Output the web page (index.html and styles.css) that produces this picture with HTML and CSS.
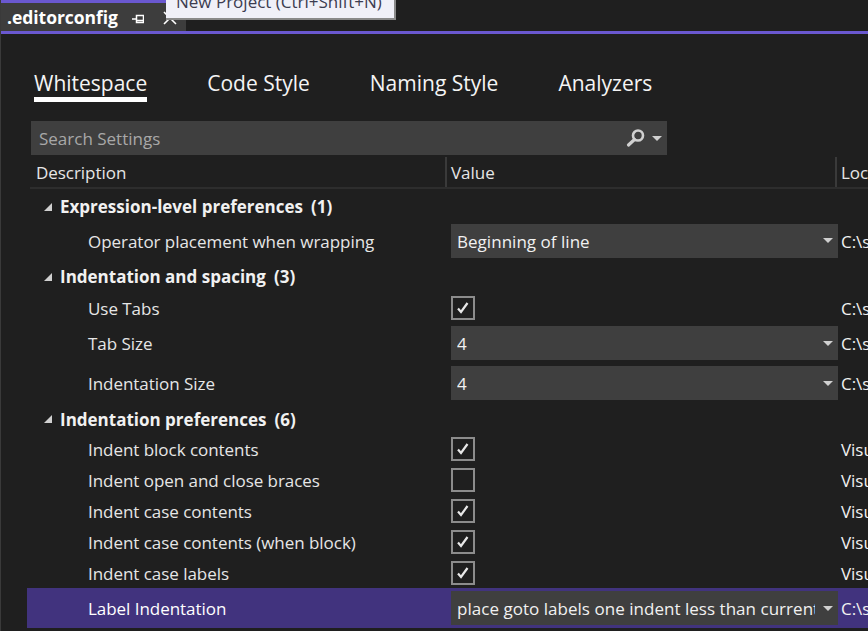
FILE: index.html
```html
<!DOCTYPE html>
<html lang="en">

<head>
    <meta charset="UTF-8">
    <title>.editorconfig</title>
    <link rel="stylesheet" href="styles.css">
</head>

<body>
    <div class="tabstrip">
        <div class="doc-tab">
            <span class="doc-name">.editorconfig</span>
            <svg class="pin" width="12" height="12" viewBox="0 0 12 12">
                <path d="M0 6h4M4.500 2.500h7v7h-7zM4.500 7.500h7" fill="none" stroke="#fff" stroke-width="1.500"/>
            </svg>
            <svg class="close" width="14" height="14" viewBox="0 0 14 14">
                <path d="M1 1l12 12M13 1L1 13" fill="none" stroke="#fff" stroke-width="1.600"/>
            </svg>
        </div>
        <div class="tooltip">New Project (Ctrl+Shift+N)</div>
    </div>

    <div class="editor">
        <div class="nav">
            <a class="nav-item active">Whitespace</a>
            <a class="nav-item">Code Style</a>
            <a class="nav-item">Naming Style</a>
            <a class="nav-item">Analyzers</a>
        </div>

        <div class="search">
            <span class="search-text">Search Settings</span>
            <svg class="search-icon" width="20" height="20" viewBox="0 0 20 20">
                <circle cx="12" cy="7.500" r="5" fill="none" stroke="#d0d0d0" stroke-width="2.600"/>
                <path d="M8.500 11.500L2.500 17" fill="none" stroke="#d0d0d0" stroke-width="3.200" stroke-linecap="round"/>
            </svg>
            <span class="arrow search-arrow"></span>
        </div>

        <div class="head">
            <div class="head-cell first">Description</div>
            <div class="head-cell second">Value</div>
            <div class="head-cell third">Location</div>
        </div>

        <div class="group first-group"><span class="tri"></span>Expression-level preferences<span class="count">(1)</span></div>
        <div class="row drop-one">
            <div class="name">Operator placement when wrapping</div>
            <div class="drop"><span class="drop-text">Beginning of line</span><span class="arrow"></span></div>
            <div class="loc">C:\src\.editorconfig</div>
        </div>

        <div class="group first-group"><span class="tri"></span>Indentation and spacing<span class="count">(3)</span></div>
        <div class="row check">
            <div class="name">Use Tabs</div>
            <div class="box"><svg width="16" height="16" viewBox="0 0 16 16"><path d="M3 8.500l3 3.500 6.500-9" fill="none" stroke="#e8e8e8" stroke-width="2.200"/></svg></div>
            <div class="loc">C:\src\.editorconfig</div>
        </div>
        <div class="row drop-row">
            <div class="name">Tab Size</div>
            <div class="drop"><span class="drop-text">4</span><span class="arrow"></span></div>
            <div class="loc">C:\src\.editorconfig</div>
        </div>
        <div class="row drop-row">
            <div class="name">Indentation Size</div>
            <div class="drop"><span class="drop-text">4</span><span class="arrow"></span></div>
            <div class="loc">C:\src\.editorconfig</div>
        </div>

        <div class="group last-group"><span class="tri"></span>Indentation preferences<span class="count">(6)</span></div>
        <div class="row check">
            <div class="name">Indent block contents</div>
            <div class="box"><svg width="16" height="16" viewBox="0 0 16 16"><path d="M3 8.500l3 3.500 6.500-9" fill="none" stroke="#e8e8e8" stroke-width="2.200"/></svg></div>
            <div class="loc">Visual Studio defaults</div>
        </div>
        <div class="row check">
            <div class="name">Indent open and close braces</div>
            <div class="box"></div>
            <div class="loc">Visual Studio defaults</div>
        </div>
        <div class="row check">
            <div class="name">Indent case contents</div>
            <div class="box"><svg width="16" height="16" viewBox="0 0 16 16"><path d="M3 8.500l3 3.500 6.500-9" fill="none" stroke="#e8e8e8" stroke-width="2.200"/></svg></div>
            <div class="loc">Visual Studio defaults</div>
        </div>
        <div class="row check">
            <div class="name">Indent case contents (when block)</div>
            <div class="box"><svg width="16" height="16" viewBox="0 0 16 16"><path d="M3 8.500l3 3.500 6.500-9" fill="none" stroke="#e8e8e8" stroke-width="2.200"/></svg></div>
            <div class="loc">Visual Studio defaults</div>
        </div>
        <div class="row check">
            <div class="name">Indent case labels</div>
            <div class="box"><svg width="16" height="16" viewBox="0 0 16 16"><path d="M3 8.500l3 3.500 6.500-9" fill="none" stroke="#e8e8e8" stroke-width="2.200"/></svg></div>
            <div class="loc">Visual Studio defaults</div>
        </div>
        <div class="row drop-row selected">
            <div class="name">Label Indentation</div>
            <div class="drop"><span class="drop-text">place goto labels one indent less than current</span><span class="arrow"></span></div>
            <div class="loc">C:\src\.editorconfig</div>
        </div>
    </div>
</body>

</html>
```

FILE: styles.css
```css
html,
body {
    margin: 0;
    height: 631px;
    overflow: hidden;
}

body {
    background-color: #1f1f1f;
    color: #f1f1f1;
    font-family: "Open Sans", "Noto Sans", sans-serif;
    font-size: 17px;
    letter-spacing: -0.04px;
    border-left: 1px solid #3a3a3a;
    position: relative;
}

/* document tab strip */
.tabstrip {
    height: 31px;
    border-bottom: 3px solid #6a58d0;
}

.doc-tab {
    width: 185px;
    height: 28px;
    border-top: 3px solid #6a58d0;
    background-color: #3d3d3d;
    display: flex;
    align-items: center;
    box-sizing: content-box;
}

.doc-name {
    margin-left: 6px;
    width: 125px;
    font-weight: 700;
    font-size: 17.500px;
    color: #fff;
    line-height: 28px;
}

.pin {
    margin-top: 4px;
}

.close {
    margin-left: 19px;
    margin-top: 2px;
}

.tooltip {
    position: absolute;
    left: 165px;
    top: 0;
    width: 218px;
    height: 18px;
    padding-left: 10px;
    background-color: #f0f0f8;
    border-right: 2px solid #8a8a8a;
    border-bottom: 2px solid #8a8a8a;
    color: #3c3c50;
    font-size: 17px;
    letter-spacing: 0;
    line-height: 4px;
}

/* editor */
.editor {
    width: 900px;
}

.nav {
    height: 87px;
    display: flex;
    gap: 60px;
    padding-left: 33px;
    box-sizing: border-box;
}

.nav-item {
    margin-top: 33px;
    height: 30px;
    font-size: 21px;
    letter-spacing: 0;
    line-height: 32px;
    color: #f4f4f4;
}

.active {
    border-bottom: 5px solid #fff;
}

.search {
    margin-left: 30px;
    width: 636px;
    height: 34px;
    background-color: #3f3f3f;
    display: flex;
    align-items: center;
    box-sizing: border-box;
    padding-left: 8px;
}

.search-text {
    flex: 1;
    color: #a8a8a8;
    font-size: 17px;
    letter-spacing: 0;
}

.search-icon {
    margin-right: 6px;
}

.search-arrow {
    margin-right: 5px;
}

.arrow {
    width: 0;
    height: 0;
    border-left: 5px solid transparent;
    border-right: 5px solid transparent;
    border-top: 5px solid #d0d0d0;
}

.head {
    margin-left: 29px;
    margin-top: 2px;
    height: 32px;
    display: grid;
    grid-template-columns: 415px 390px 100px;
    border-bottom: 2px solid #2d2d2d;
    box-sizing: border-box;
}

.head-cell {
    line-height: 32px;
    color: #e6e6e6;
    white-space: nowrap;
    overflow: hidden;
}

.first {
    padding-left: 6px;
}

.second,
.third {
    border-left: 2px solid #3a3a3a;
    padding-left: 4px;
}

/* settings rows */
.group {
    display: flex;
    align-items: center;
    padding-left: 59px;
    font-weight: 700;
    font-size: 17px;
    letter-spacing: 0;
    position: relative;
    padding-top: 2px;
    box-sizing: border-box;
}

.first-group {
    height: 33px;
}

.last-group {
    height: 30px;
}

.count {
    margin-left: 8px;
}

.tri {
    position: absolute;
    left: 43px;
    top: 50%;
    margin-top: -3px;
    width: 0;
    height: 0;
    border-left: 8px solid transparent;
    border-bottom: 8px solid #d0d0d0;
}

.row {
    margin-left: 26px;
    display: grid;
    grid-template-columns: 424px 387px 60px;
    align-items: center;
    box-sizing: border-box;
}

.check {
    height: 31px;
}

.drop-one {
    height: 37px;
}

.drop-row {
    height: 40px;
}

.name {
    padding-left: 61px;
    padding-top: 1px;
    color: #e6e6e6;
}

.loc {
    padding-left: 3px;
    padding-top: 1px;
    white-space: nowrap;
    color: #f1f1f1;
}

.drop {
    height: 34px;
    background-color: #3f3f3f;
    display: flex;
    align-items: center;
    padding-right: 5px;
    box-sizing: border-box;
}

.drop-text {
    flex: 1;
    margin-left: 6px;
    margin-right: 8px;
    padding-top: 1px;
    letter-spacing: 0.03px;
    white-space: nowrap;
    overflow: hidden;
    min-width: 0;
}

.box {
    width: 24px;
    height: 24px;
    box-sizing: border-box;
    border: 2px solid #8c8c8c;
    display: flex;
    align-items: center;
    justify-content: center;
}

.selected {
    background-color: #41337e;
    width: 900px;
}

.selected .name {
    color: #fff;
}
```
